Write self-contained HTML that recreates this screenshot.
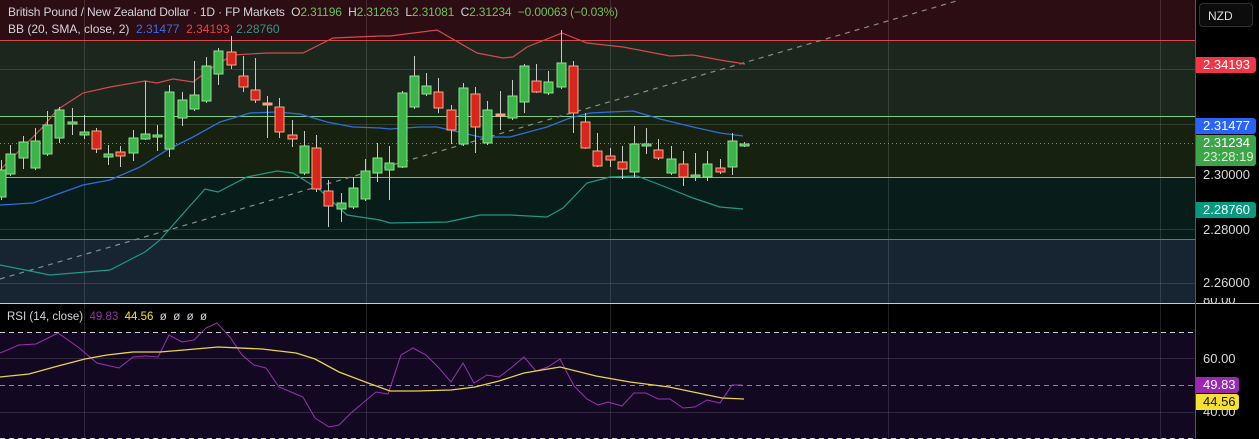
<!DOCTYPE html>
<html><head><meta charset="utf-8"><style>
html,body{margin:0;padding:0;background:#000;width:1259px;height:439px;overflow:hidden;font-family:"Liberation Sans",sans-serif}
svg{position:absolute;left:0;top:0}
.lbl{position:absolute;left:1196px;width:60px;font-size:13px;color:#fff;padding-left:7px;box-sizing:border-box;line-height:16px;border-radius:0 3px 3px 0}
.ax{position:absolute;left:1203px;font-size:13px;color:#d8d8d8}
.hd{position:absolute;left:8px;font-size:12px;color:#d1d4dc;white-space:pre}
</style></head><body>
<svg id="s" width="1259" height="439" xmlns="http://www.w3.org/2000/svg"></svg>
<div class="hd" style="top:5px;letter-spacing:-0.15px">British Pound / New Zealand Dollar · 1D · FP Markets  O<span style="color:#6fc25a">2.31196</span>  H<span style="color:#6fc25a">2.31263</span>  L<span style="color:#6fc25a">2.31081</span>  C<span style="color:#6fc25a">2.31234</span>  <span style="color:#6fc25a">−0.00063 (−0.03%)</span></div>
<div class="hd" style="top:22px">BB (20, SMA, close, 2)  <span style="color:#3f68e8">2.31477</span>  <span style="color:#e8404a">2.34193</span>  <span style="color:#2a9a86">2.28760</span></div>
<div class="hd" style="top:311px;left:7px;font-size:11.5px">RSI (14, close)  <span style="color:#9b2fb0">49.83</span>  <span style="color:#f5e12f">44.56</span>  <span>ø  ø  ø  ø</span></div>
<div style="position:absolute;left:1199px;top:3px;width:54px;height:24px;border:1px solid #333;border-radius:4px;background:#0c0c0c;color:#ddd;font-size:12px;line-height:24px;padding-left:8px;box-sizing:border-box">NZD</div>
<div class="lbl" style="top:57px;background:#f23645">2.34193</div>
<div class="lbl" style="top:118px;background:#2962ff">2.31477</div>
<div class="lbl" style="top:135px;height:31px;background:#3ba548;line-height:14px;padding-top:1px;width:60px">2.31234<br><span style="color:#d8f0d8">23:28:19</span></div>
<div class="ax" style="top:167px">2.30000</div>
<div class="lbl" style="top:202px;background:#089981">2.28760</div>
<div class="ax" style="top:222px">2.28000</div>
<div class="ax" style="top:275px">2.26000</div>
<div class="ax" style="top:298px;height:8px;overflow:hidden;line-height:4px">80.00</div>
<div class="ax" style="top:351px">60.00</div>
<div class="ax" style="top:404px">40.00</div>
<div class="lbl" style="top:377px;background:#9c27b0;width:43px;padding-left:7px">49.83</div>
<div class="lbl" style="top:394px;background:#f5e12f;color:#111;width:43px;padding-left:7px">44.56</div>
<script>
var s=document.getElementById('s'),h='';
function r(x,y,w,hh,c){h+='<rect x="'+x+'" y="'+y+'" width="'+w+'" height="'+hh+'" fill="'+c+'"/>';}
function l(x1,y1,x2,y2,c,w,d){h+='<line x1="'+x1+'" y1="'+y1+'" x2="'+x2+'" y2="'+y2+'" stroke="'+c+'" stroke-width="'+(w||1)+'"'+(d?' stroke-dasharray="'+d+'"':'')+'/>';}
function p(pts,c,w,d){h+='<polyline fill="none" stroke="'+c+'" stroke-width="'+(w||1)+'"'+(d?' stroke-dasharray="'+d+'"':'')+' points="'+pts+'"/>';}
var W=1195;
r(0,0,W,40,'#2c0d13');r(0,40,W,76,'#1b271d');r(0,116,W,61,'#16220f');r(0,177,W,62,'#081c1a');r(0,239,W,64,'#162531');
r(0,304,W,28,'#000');r(0,332,W,107,'#120822');
[69,124,229,283].forEach(function(y){l(0,y+.5,W,y+.5,'rgba(255,255,255,0.13)');});
[358,412].forEach(function(y){l(0,y+.5,W,y+.5,'rgba(255,255,255,0.13)');});
[84,366,610,888,1160].forEach(function(x){l(x+.5,0,x+.5,439,'rgba(255,255,255,0.13)');});
l(0,40.5,W,40.5,'#d9474f');l(0,116.5,W,116.5,'#7fcf7f');l(0,177.5,W,177.5,'#6dc46d');l(0,239.5,W,239.5,'#1f9a86');
l(0,143.5,W,143.5,'#4caf50',1,'1 3');
l(0,303.5,1259,303.5,'#c8ccd6');
l(1195.5,0,1195.5,439,'#555');
l(0,332.5,W,332.5,'#ccc',1,'5 4');l(0,385.5,W,385.5,'#888',1,'5 4');l(0,438.5,W,438.5,'#ccc',1,'5 4');
l(0,279,960,0,'#8a8a8a',1.2,'5 5');
p('0,170 20,150 43,127 57,110 83,93 110,87 145,81 157,83 173,79 193,82 213,67 233,55 267,53 303,53 333,38 380,36 390,36 437,30 477,53 503,58 513,57 527,47 562,33 587,43 623,47 670,56 693,55 720,60 745,64','#d9474f',1.2);
p('0,205 33,203 83,185 110,180 140,167 167,150 193,137 220,122 250,113 277,112 300,114 327,122 353,127 380,128 390,129 420,127 437,127 480,137 510,137 547,127 570,118 590,113 610,112 633,111 660,119 693,127 720,133 743,136','#2f6de0',1.3);
p('0,265 50,275 110,270 145,252 160,240 180,217 205,189 218,192 247,177 277,171 293,173 320,190 347,215 380,220 390,223 447,222 480,215 510,215 547,217 563,208 587,183 610,177 637,176 663,186 693,198 720,207 743,209','#1f9a86',1.2);
var C=[[1,170,197,160,200,1],[10,154,174,145,176,1],[23,142,158,136,169,1],[35,141,168,128,170,1],[47,125,154,111,156,1],[59,110,138,107,143,1],[72,122,124,108,135,1],[84,132,135,115,139,1],[96,131,149,128,153,0],[108,154,157,145,165,1],[120,152,156,146,167,0],[133,138,153,130,161,1],[145,134,139,81,140,1],[157,135,137,125,151,1],[169,92,149,85,157,1],[182,100,118,92,126,1],[194,95,109,61,111,1],[206,66,101,57,103,1],[218,51,74,48,85,1],[231,52,65,36,69,0],[243,76,87,56,92,0],[255,90,100,58,103,0],[267,103,104,96,138,2],[279,107,132,98,138,0],[292,135,139,120,147,0],[304,146,173,131,175,1],[316,148,189,135,192,0],[328,191,206,180,227,0],[341,203,209,193,222,1],[353,188,207,177,209,1],[365,171,199,159,201,1],[377,158,173,143,182,1],[389,163,170,146,200,1],[402,93,167,91,168,1],[414,76,107,56,109,1],[426,86,94,73,96,1],[438,92,108,78,113,0],[451,110,130,105,144,0],[463,88,144,83,146,1],[475,94,127,87,153,0],[487,110,143,101,145,1],[500,114,115,91,130,2],[512,96,118,80,120,1],[524,66,102,64,113,1],[536,81,92,64,93,0],[548,82,93,71,95,1],[561,63,87,30,89,1],[573,66,113,61,133,0],[585,122,148,113,149,0],[597,151,166,133,167,0],[610,156,160,148,167,0],[622,162,169,146,179,0],[634,144,172,126,177,1],[646,144,145,128,154,1],[658,150,158,139,160,0],[671,159,173,146,175,1],[683,164,177,151,186,0],[695,175,177,153,181,1],[707,164,177,151,181,1],[720,168,172,159,174,0],[732,141,167,133,175,1],[744,144,145,142,147,1]];
C.forEach(function(c){var x=c[0],g=c[5];l(x+.5,c[3],x+.5,c[4],'#c9c9c9',1);
var fc=g==1?'#3bb54a':g==0?'#d9261c':'#f0a080',sc=g==1?'#90e090':'#f5a98a';
var hh=Math.max(c[2]-c[1],2);h+='<rect x="'+(x-4)+'" y="'+c[1]+'" width="9" height="'+hh+'" fill="'+fc+'" stroke="'+sc+'" stroke-width="1"/>';});
p('0,353 19,345 36,344 58,333 78,347 97,363 119,368 133,357 145,356 158,357 169,335 182,342 194,340 206,328 217,323 230,337 242,355 254,365 266,368 279,387 291,392 303,397 315,418 329,427 339,425 351,413 364,402 376,392 388,394 401,355 413,348 426,355 439,368 451,382 463,363 474,383 487,375 499,377 511,368 524,357 536,371 548,367 560,359 574,386 587,399 598,405 608,402 622,406 634,393 646,393 658,399 670,399 683,408 695,407 707,400 720,403 732,385 742,385','#9c2fb3',1);
p('0,377 29,374 58,366 85,359 107,355 133,352 160,352 184,350 218,347 262,349 296,353 315,359 339,372 368,383 390,391 417,391 451,390 475,387 499,381 524,373 560,367 596,376 630,382 669,387 698,393 722,398 744,399','#e8d44a',1.3);
s.innerHTML=h;
</script>
</body></html>
